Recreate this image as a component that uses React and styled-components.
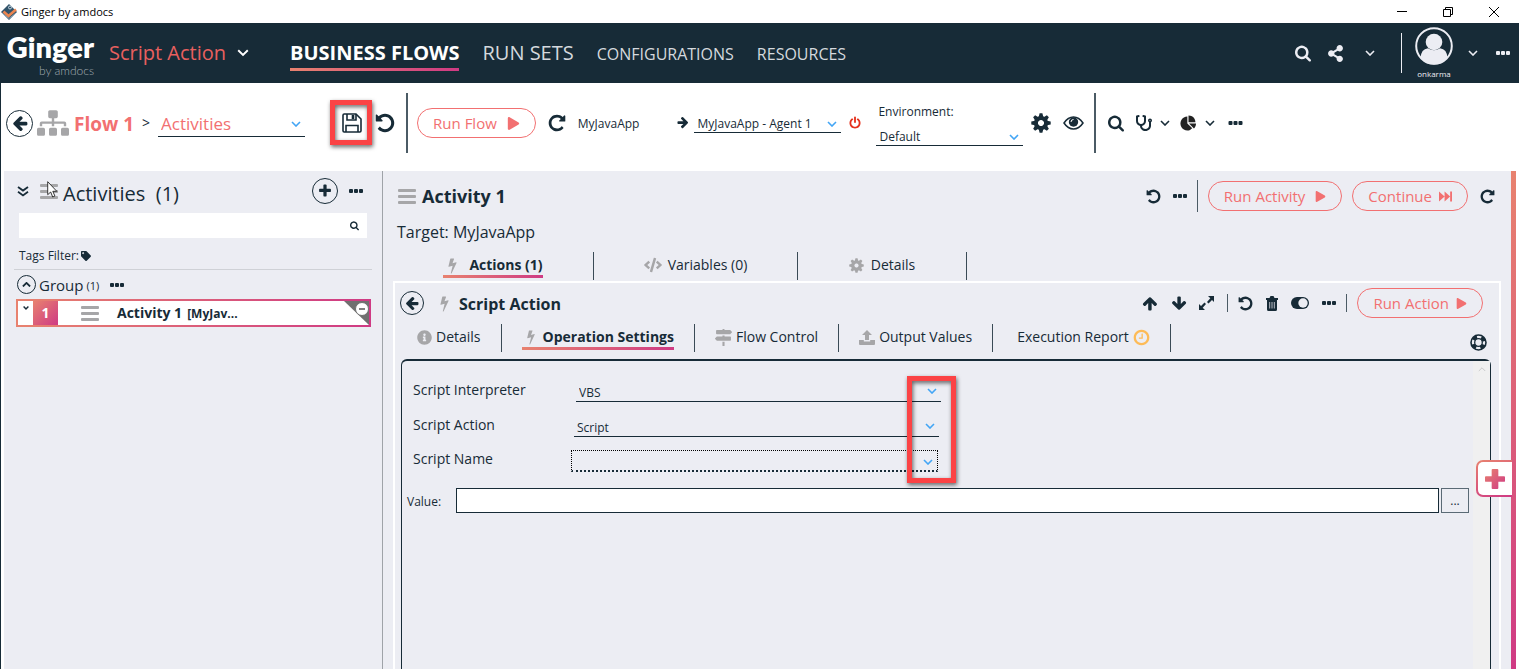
import React from 'react';
import styled, { createGlobalStyle, css } from 'styled-components';
import {
  FaStethoscope, FaShareAlt, FaCode, FaInfoCircle, FaMapSigns,
  FaTag, FaSitemap, FaPlay,
} from 'react-icons/fa';

const ink = '#172b37';
const coral = '#f27071';
const pane = '#ecedf3';
const warm = '#e8826f';
const pink = '#cf3a84';

const GlobalStyle = createGlobalStyle`
  *, *::before, *::after { box-sizing: border-box; }
  body { margin: 0; background: #fff; color: ${ink}; font: 14px/20px "Open Sans", sans-serif; }
  button, select, input { font: inherit; color: inherit; margin: 0; padding: 0; border: 0; background: none; border-radius: 0; }
  button { cursor: pointer; }
  h1, h2, h3, p { margin: 0; font-weight: 400; }
  svg { display: block; flex: none; }
`;

/* ---------- icons ---------- */

const paths = {
  left: 'M1664 896v128q0 53-32.5 90.5t-84.5 37.5h-704l293 294q38 36 38 90t-38 90l-75 76q-37 37-90 37-52 0-91-37l-651-652q-37-37-37-90 0-52 37-91l651-650q38-38 91-38 52 0 90 38l75 74q38 38 38 91t-38 91l-293 293h704q52 0 84.5 37.5t32.5 90.5z',
  undo: 'M1664 896q0 156-61 298t-164 245-245 164-298 61q-172 0-327-72.5t-264-204.5q-7-10-6.5-22.5t8.5-20.5l137-138q10-9 25-9 16 2 23 12 73 95 179 147t225 52q104 0 198.5-40.5t163.5-109.5 109.5-163.5 40.5-198.5-40.5-198.5-109.5-163.5-163.5-109.5-198.5-40.5q-98 0-188 35.5t-160 101.5l137 138q31 30 14 69-17 40-59 40h-448q-26 0-45-19t-19-45v-448q0-42 40-59 39-17 69 14l130 129q107-101 244.5-156.5t284.5-55.5q156 0 298 61t245 164 164 245 61 298z',
  search: 'M1216 832q0-185-131.5-316.5t-316.5-131.5-316.5 131.5-131.5 316.5 131.5 316.5 316.5 131.5 316.5-131.5 131.5-316.5zm512 832q0 52-38 90t-90 38q-54 0-90-38l-343-342q-179 124-399 124-143 0-273.5-55.5t-225-150-150-225-55.5-273.5 55.5-273.5 150-225 225-150 273.5-55.5 273.5 55.5 225 150 150 225 55.5 273.5q0 220-124 399l343 343q37 37 37 90z',
  plus: 'M1600 736v192q0 40-28 68t-68 28h-416v416q0 40-28 68t-68 28h-192q-40 0-68-28t-28-68v-416h-416q-40 0-68-28t-28-68v-192q0-40 28-68t68-28h416v-416q0-40 28-68t68-28h192q40 0 68 28t28 68v416h416q40 0 68 28t28 68z',
  power: 'M1664 896q0 156-61 298t-164 245-245 164-298 61-298-61-245-164-164-245-61-298q0-182 80.5-343t226.5-270q43-32 95.5-25t83.5 50q32 42 24.5 94.5t-49.5 84.5q-98 74-151.5 181t-53.5 228q0 104 40.5 198.5t109.5 163.5 163.5 109.5 198.5 40.5 198.5-40.5 163.5-109.5 109.5-163.5 40.5-198.5q0-121-53.5-228t-151.5-181q-42-32-49.5-84.5t24.5-94.5q31-43 84-50t95 25q146 109 226.5 270t80.5 343zm-640-768v640q0 52-38 90t-90 38-90-38-38-90v-640q0-52 38-90t90-38 90 38 38 90z',
  pie: 'M768 890l546 546q-106 108-247.5 168t-298.5 60q-209 0-385.5-103t-279.5-279.5-103-385.5 103-385.5 279.5-279.5 385.5-103v762zm187 6h773q0 157-60 298.5t-168 247.5zm709-128h-768v-768q209 0 385.5 103t279.5 279.5 103 385.5z',
  clock: 'M1024 544v448q0 14-9 23t-23 9h-320q-14 0-23-9t-9-23v-64q0-14 9-23t23-9h224v-352q0-14 9-23t23-9h64q14 0 23 9t9 23zm416 352q0-148-73-273t-198-198-273-73-273 73-198 198-73 273 73 273 198 198 273 73 273-73 198-198 73-273zm224 0q0 209-103 385.5t-279.5 279.5-385.5 103-385.5-103-279.5-279.5-103-385.5 103-385.5 279.5-279.5 385.5-103 385.5 103 279.5 279.5 103 385.5z',
  bolt: 'M1333 566q18 20 7 44l-540 1157q-13 25-42 25-4 0-14-2-17-5-25.5-19t-4.5-30l197-808-406 101q-4 1-12 1-18 0-31-11-18-15-13-39l201-825q4-16 18-26.5t32-10.5h328q19 0 32 12.5t13 29.5q0 8-5 18l-171 463 396-98q8-2 12-2 19 0 34 15z',
};

const turns = { right: 'rotate(180 896 896)', up: 'rotate(90 896 896)', down: 'rotate(-90 896 896)', flip: 'matrix(-1 0 0 1 1792 0)' };

const Glyph = ({ name, size = 16, turn, fill = 'currentColor' }) => (
  <svg width={size} height={size} viewBox="64 64 1664 1664" overflow="visible" aria-hidden="true">
    <path d={paths[name]} fill={fill} transform={turn ? turns[turn] : undefined} />
  </svg>
);

const Gear = ({ size }) => (
  <svg width={size} height={size} viewBox="0 0 20 20" fill="currentColor" aria-hidden="true">
    {[0, 45, 90, 135].map((a) => (
      <path key={a} transform={`rotate(${a} 10 10)`} d="M8.600.300h2.800l.900 3.700V7H7.700V4zM8.600 19.700h2.800l.900-3.700v-3H7.700v3z" />
    ))}
    <circle cx="10" cy="10" r="5.100" fill="none" stroke="currentColor" strokeWidth="4" />
  </svg>
);
const Dots = ({ w = 14 }) => (
  <svg width={w} height="4" viewBox="0 0 14 4" fill="currentColor" aria-hidden="true">
    <rect width="4" height="4" rx="1" /><rect x="5" width="4" height="4" rx="1" /><rect x="10" width="4" height="4" rx="1" />
  </svg>
);
const Chevron = ({ w = 10, flip, weight = 1.6 }) => (
  <svg width={w} height={w * 0.6} viewBox="0 0 10 6" fill="none" stroke="currentColor" strokeWidth={weight} aria-hidden="true">
    <path d={flip ? 'M1 5l4-4 4 4' : 'M1 1l4 4 4-4'} />
  </svg>
);
const Bars = () => (
  <svg width="18" height="15" viewBox="0 0 18 15" fill="#a6a6a8" aria-hidden="true">
    <rect width="18" height="3" rx="1" /><rect y="6" width="18" height="3" rx="1" /><rect y="12" width="18" height="3" rx="1" />
  </svg>
);
const Floppy = () => (
  <svg width="20" height="20" viewBox="0 0 20 20" fill="none" stroke="currentColor" strokeWidth="1.6" aria-hidden="true">
    <path d="M1 2.200Q1 1 2.200 1H14l5 5v11.800q0 1.200-1.200 1.200H2.200Q1 19 1 17.800z" />
    <path d="M5 1v6h9V1M4 19v-6.500h12V19" />
    <path d="M11 2v4" strokeWidth="2.600" />
  </svg>
);
const Eye = () => (
  <svg width="21" height="14" viewBox="0 0 21 14" aria-hidden="true">
    <path d="M1 7Q5 1 10.500 1T20 7Q16 13 10.500 13T1 7z" fill="none" stroke="currentColor" strokeWidth="1.500" />
    <circle cx="10.500" cy="6" r="4.700" fill="currentColor" />
    <path d="M8 6q0-2.500 2.500-2.500" stroke="#fff" strokeWidth="1" fill="none" />
  </svg>
);
const Trash = () => (
  <svg width="12" height="15" viewBox="0 0 12 15" aria-hidden="true">
    <path d="M0 2h3.500L4.500 0h3l1 2H12v2H0zM1 4h10v9.500q0 1.500-1.500 1.500h-7Q1 15 1 13.500z" fill="currentColor" />
    <path d="M3.700 6v6.500M6 6v6.500M8.300 6v6.500" stroke="#b9bdc6" strokeWidth="1" />
  </svg>
);
const Toggle = () => (
  <svg width="18" height="12" viewBox="0 0 18 12" aria-hidden="true">
    <rect width="18" height="12" rx="6" fill="currentColor" /><circle cx="12" cy="6" r="4.700" fill={pane} />
  </svg>
);
const Expand = () => (
  <svg width="15" height="14" viewBox="0 0 15 14" fill="currentColor" aria-hidden="true">
    <path d="M9 0h6v6l-2-2-3.500 3.400L8 6l3.300-3.700zM0 8l2 2 3.500-3.400L7 8l-3.300 3.700L6 14H0z" />
  </svg>
);
const LifeRing = () => (
  <svg width="17" height="17" viewBox="0 0 17 17" fill="none" stroke="currentColor" aria-hidden="true">
    <circle cx="8.500" cy="8.500" r="7.500" strokeWidth="1.600" />
    <circle cx="8.500" cy="8.500" r="3.800" strokeWidth="1.300" />
    <circle cx="8.500" cy="8.500" r="5.700" strokeWidth="3.600" strokeDasharray="4.500 4.454" strokeDashoffset="-2.230" />
  </svg>
);
const Upload = () => (
  <svg width="16" height="15" viewBox="0 0 16 15" fill="currentColor" aria-hidden="true">
    <path d="M8 0l5 5h-3v5H6V5H3zM0 10h4.800v1.500h6.400V10H16v4q0 1-1 1H1q-1 0-1-1z" />
  </svg>
);
const FastForward = () => (
  <svg width="13" height="11" viewBox="0 0 14 11" fill="currentColor" aria-hidden="true">
    <path d="M0 0l6 5.500L0 11zM6 0l6 5.500L6 11zM12 0h2v11h-2z" />
  </svg>
);
const Avatar = () => (
  <svg width="38" height="38" viewBox="0 0 38 38" aria-hidden="true">
    <circle cx="19" cy="19" r="17.800" fill="none" stroke={pane} strokeWidth="2" />
    <circle cx="19" cy="15" r="8.300" fill={pane} />
    <path d="M5.500 31q.500-9 7.500-9.800 6 4 12 0 7 .800 7.500 9.800-5 6.500-13.500 6.500T5.500 31z" fill={pane} />
  </svg>
);
const AppMark = () => (
  <svg width="16" height="16" viewBox="0 0 16 16" aria-hidden="true">
    <path d="M8 0l8 8-8 8-8-8z" fill="#31536a" />
    <circle cx="9" cy="3.500" r="1.500" fill="none" stroke="#c4d4de" />
    <path d="M2.500 7.500l5 4.500L15 5.500" fill="none" stroke="#ea8550" strokeWidth="2.600" />
    <path d="M1 9l7 5.500L15 9" fill="none" stroke="#a9c0cd" strokeWidth=".700" />
  </svg>
);
const DoubleChevron = () => (
  <svg width="12" height="11" viewBox="0 0 12 11" fill="none" stroke="currentColor" strokeWidth="1.800" aria-hidden="true">
    <path d="M1 1l5 3.600L11 1M1 5.800l5 3.600 5-3.600" />
  </svg>
);

/* ---------- shared parts ---------- */

const Page = styled.div`
  display: flex;
  flex-direction: column;
  min-height: 100vh;
`;
const Group = styled.div`
  display: flex;
  align-items: center;
  gap: ${(p) => p.$gap || 0}px;
  margin-left: ${(p) => (p.$push ? 'auto' : `${p.$ml || 0}px`)};
`;
const IconButton = styled.button`
  display: grid;
  place-items: center;
  flex: none;
  color: ${(p) => p.$color || 'inherit'};
`;
const RoundButton = styled(IconButton)`
  width: ${(p) => p.$size}px;
  height: ${(p) => p.$size}px;
  border: 1px solid ${ink};
  border-radius: 50%;
  background: ${(p) => p.$bg || '#fff'};
`;
const Pill = styled.button`
  display: flex;
  align-items: center;
  justify-content: center;
  gap: ${(p) => p.$gap || 10}px;
  height: 30px;
  padding: 0 15px;
  border: 1px solid ${coral};
  border-radius: 15px;
  color: ${coral};
  font-size: 15px;
  white-space: nowrap;
`;
const Rule = styled.span`
  flex: none;
  width: ${(p) => p.$w || 1}px;
  height: ${(p) => p.$h}px;
  background: ${(p) => p.$color || '#4b5b65'};
`;
const SelectBox = styled.span`
  position: relative;
  display: flex;
  width: ${(p) => p.$w}px;
  border-bottom: ${(p) => (p.$focus ? 0 : '1px')} solid ${ink};
  ${(p) => p.$focus && css`
    margin-top: 2px;
    border: 1px dotted #000;
    border-bottom: 2px dotted ${ink};
  `}
  > svg { position: absolute; right: 4px; top: 50%; margin-top: -2px; color: #42a5f5; pointer-events: none; }
`;
const NativeSelect = styled.select`
  appearance: none;
  flex: 1;
  height: ${(p) => p.$h || 18}px;
  padding: ${(p) => p.$drop || 0}px 18px 0 3px;
  outline: 0;
  font-size: ${(p) => p.$size || 12}px;
  line-height: 18px;
  color: ${(p) => p.$color || 'inherit'};
`;
const Picker = ({ id, label, value, w, h, size, color, focus, drop }) => (
  <SelectBox $w={w} $focus={focus}>
    <NativeSelect id={id} aria-label={label} $h={h} $size={size} $color={color} $drop={drop}><option>{value}</option></NativeSelect>
    <Chevron />
  </SelectBox>
);
const Highlight = styled.span`
  position: absolute;
  inset: ${(p) => p.$inset};
  border: 5px solid #fb4345;
  filter: drop-shadow(1px 2px 2px rgba(0, 0, 0, 0.6));
  pointer-events: none;
`;
const Anchor = styled.span`
  position: relative;
  display: flex;
`;

/* ---------- title bar and header ---------- */

const TitleBar = styled.div`
  display: flex;
  align-items: center;
  justify-content: space-between;
  height: 23px;
  padding: 0 20px 0 1px;
  color: #000;
  font-size: 11px;
`;
const Header = styled.header`
  display: flex;
  align-items: center;
  height: 60px;
  padding: 0 9px 0 5px;
  background: ${ink};
  color: ${pane};
`;
const Logo = styled.div`
  display: flex;
  flex-direction: column;
  align-items: flex-end;
  width: 89px;
  font-family: Lato, sans-serif;
`;
const LogoName = styled.span`
  font-size: 29px;
  font-weight: 800;
  line-height: 35px;
  color: #fff;
`;
const LogoBy = styled.span`
  font-size: 12px;
  font-weight: 300;
  line-height: 14px;
  color: #a2abb2;
`;
const Solution = styled.button`
  display: flex;
  align-items: center;
  gap: 11px;
  margin-left: 15px;
  font-size: 20px;
  color: #e8605f;
  > svg { color: #fff; }
`;
const Nav = styled.nav`
  display: flex;
  align-items: baseline;
  gap: 23px;
  margin-left: 41px;
`;
const NavLink = styled.a`
  padding: 4px 0 1px;
  border-bottom: 3px solid transparent;
  color: ${(p) => (p.$active ? '#fff' : '#d5d9de')};
  font-size: ${(p) => (p.$small ? 16 : 20)}px;
  font-weight: ${(p) => (p.$active ? 700 : 400)};
  line-height: 28px;
  text-decoration: none;
  white-space: nowrap;
  ${(p) => p.$active && css`border-image: linear-gradient(90deg, ${warm}, ${pink}) 1;`}
`;
const User = styled.button`
  display: flex;
  flex-direction: column;
  align-items: center;
  gap: 4px;
  font-size: 8px;
  line-height: 10px;
`;

/* ---------- toolbar ---------- */

const Frame = styled.div`
  display: flex;
  flex: 1;
  flex-direction: column;
  border-left: 1px solid ${ink};
`;
const Toolbar = styled.div`
  display: flex;
  align-items: center;
  height: 80px;
  margin-bottom: 8px;
  padding-left: 5px;
  white-space: nowrap;
`;
const FlowName = styled.h1`
  margin-left: 5px;
  padding-top: 2px;
  color: ${coral};
  font-size: 19px;
  font-weight: 700;
`;
const Small = styled.span`
  font-size: ${(p) => p.$size || 12}px;
  padding-top: 2px;
`;
const Environment = styled.label`
  display: flex;
  flex-direction: column;
  gap: 5px;
  padding-top: 2px;
  font-size: 12px;
  > span:first-child { padding-left: 2px; }
`;

/* ---------- activities sidebar ---------- */

const Body = styled.div`
  display: flex;
  flex: 1;
  padding: 0 3px;
`;
const Sidebar = styled.aside`
  width: 379px;
  padding: 6px 10px 0;
  border-right: 1px solid #9fa3a8;
  background: ${pane};
`;
const SideHead = styled.div`
  display: flex;
  align-items: center;
  height: 28px;
  padding: 0 9px 0 3px;
`;
const SideTitle = styled.h2`
  margin: 6px 0 0 5px;
  font-size: 20px;
  line-height: 26px;
  white-space: pre;
`;
const Cursor = styled.svg`
  position: absolute;
  top: -3px;
  left: 7px;
`;
const SearchBox = styled.div`
  display: flex;
  align-items: center;
  height: 25px;
  margin: 8px 5px 7px;
  padding-right: 8px;
  background: #fff;
  input { flex: 1; height: 25px; outline: 0; }
`;
const Tags = styled.div`
  display: flex;
  align-items: center;
  gap: 2px;
  height: 25px;
  padding: 0 0 2px 5px;
  border-bottom: 1px solid #cfd1d6;
  font-size: 12px;
`;
const GroupRow = styled.div`
  display: flex;
  align-items: center;
  gap: 3px;
  height: 29px;
  padding: 0 0 0 3px;
  font-size: 15px;
`;
const ActivityItem = styled.div`
  position: relative;
  display: flex;
  align-items: center;
  height: 28px;
  margin: 0 1px 0 2px;
  border: 2px solid;
  border-image: linear-gradient(90deg, ${warm}, ${pink}) 1;
  background: #fff;
  font-weight: 700;
`;
const ItemArrow = styled.button`
  display: flex;
  align-self: stretch;
  justify-content: center;
  width: 15px;
  padding-top: 5px;
`;
const ItemNumber = styled.span`
  display: grid;
  place-items: center;
  align-self: stretch;
  width: 25px;
  margin-right: 23px;
  background: linear-gradient(135deg, ${warm}, ${pink});
  color: #fff;
`;
const ItemCorner = styled.svg`
  position: absolute;
  top: 0;
  right: 0;
`;

/* ---------- main pane ---------- */

const Main = styled.main`
  display: flex;
  flex: 1;
  flex-direction: column;
  min-width: 0;
  padding: 9px 10px 0;
  background: ${pane};
`;
const MainHead = styled.div`
  display: flex;
  align-items: center;
  height: 32px;
  padding: 0 6px 0 5px;
`;
const MainTitle = styled.h2`
  margin-left: 6px;
  font-size: 18px;
  font-weight: 700;
`;
const Target = styled.p`
  margin: 8px 0 8px 4px;
  font-size: 16px;
  line-height: 24px;
`;
const Tabs = styled.div`
  display: flex;
  height: 28px;
`;
const Tab = styled.button`
  display: flex;
  align-items: flex-start;
  justify-content: center;
  height: 28px;
  width: ${(p) => (p.$w ? `${p.$w}px` : 'auto')};
  padding: 0 ${(p) => (p.$w ? 0 : 20)}px;
  border-right: 1px solid #3a4b56;
  font-weight: ${(p) => (p.$active ? 700 : 400)};
`;
const TabText = styled.span`
  display: flex;
  align-items: center;
  gap: ${(p) => p.$gap || 4}px;
  height: 26px;
  padding: 3px 0 0 ${(p) => (p.$active ? 2 : 0)}px;
  border-bottom: 3px solid transparent;
  white-space: nowrap;
  ${(p) => p.$active && css`border-image: linear-gradient(90deg, ${warm}, ${pink}) 1;`}
  > svg { color: #a6a6a8; }
`;
const Card = styled.section`
  display: flex;
  flex: 1;
  flex-direction: column;
  margin-top: 1px;
  padding: 4px 8px 0 2px;
  border: 2px solid #fff;
  border-bottom: 0;
`;
const CardHead = styled.div`
  display: flex;
  align-items: center;
  height: 32px;
  padding: 0 8px 0 3px;
`;
const CardTitle = styled.h3`
  padding-top: 2px;
  font-size: 16px;
  font-weight: 700;
`;
const TabRow = styled.div`
  display: flex;
  align-items: flex-start;
  justify-content: space-between;
  height: 40px;
  padding: 5px 4px 0 0;
  > button { margin-top: 10px; }
`;
const Form = styled.form`
  display: flex;
  flex: 1;
  margin-left: 4px;
  border: 1px solid ${ink};
  border-top-width: 2px;
  border-bottom: 0;
  border-radius: 6px 6px 0 0;
`;
const Fields = styled.div`
  flex: 1;
  padding: 18px 4px 0 5px;
`;
const Field = styled.div`
  display: flex;
  align-items: flex-start;
  height: ${(p) => p.$h || 34}px;
  padding-left: 6px;
  > label { flex: none; width: ${(p) => p.$label}px; margin-top: 1px; }
`;
const FieldSet = styled.div`
  position: relative;
  width: 538px;
`;
const ValueRow = styled.div`
  display: flex;
  align-items: center;
  gap: 2px;
  margin-top: 6px;
  label { width: 47px; padding-top: 2px; font-size: 12px; }
  input { flex: 1; height: 25px; border: 1px solid ${ink}; background: #fff; padding: 0 4px; }
  button { width: 28px; height: 25px; border: 1px solid #5a6a75; font-size: 12px; line-height: 20px; }
`;
const ScrollTrack = styled.div`
  display: flex;
  justify-content: center;
  width: 17px;
  padding-top: 6px;
  background: #f0f0f0;
  color: #bfc0c2;
`;
const AddRail = styled.div`
  position: relative;
  width: 5px;
  background: linear-gradient(${warm}, ${pink});
`;
const AddTab = styled.button`
  position: absolute;
  top: 289px;
  right: 4px;
  display: grid;
  place-items: center;
  width: 36px;
  height: 37px;
  padding-right: 1px;
  border: 2px solid transparent;
  border-right: 0;
  border-radius: 7px 0 0 7px;
  background: linear-gradient(#fff, #fff) padding-box, linear-gradient(160deg, ${warm}, ${pink}) border-box;
`;

export default function App() {
  return (
    <Page>
      <GlobalStyle />
      <TitleBar>
        <Group $gap={4}><AppMark />Ginger by amdocs</Group>
        <Group $gap={36}>
          <IconButton aria-label="Minimize"><svg width="10" height="10" stroke="#000"><path d="M0 4.500h10" /></svg></IconButton>
          <IconButton aria-label="Restore"><svg width="10" height="10" fill="none" stroke="#000"><path d="M.500 2.500h7v7h-7zM2.500 2.500v-2h7v7h-2" /></svg></IconButton>
          <IconButton aria-label="Close"><svg width="10" height="10" stroke="#000"><path d="M0 0l10 10M10 0L0 10" /></svg></IconButton>
        </Group>
      </TitleBar>

      <Header>
        <Logo><LogoName>Ginger</LogoName><LogoBy>by amdocs</LogoBy></Logo>
        <Solution>Script Action<Chevron w={12} /></Solution>
        <Nav>
          <NavLink href="#flows" $active>BUSINESS FLOWS</NavLink>
          <NavLink href="#runs">RUN SETS</NavLink>
          <NavLink href="#config" $small>CONFIGURATIONS</NavLink>
          <NavLink href="#resources" $small>RESOURCES</NavLink>
        </Nav>
        <Group $push>
          <Group $gap={16}>
            <IconButton aria-label="Search"><Glyph name="search" size={16} /></IconButton>
            <IconButton aria-label="Share"><FaShareAlt size={17} /></IconButton>
          </Group>
          <Group $ml={21} $gap={26}>
            <IconButton aria-label="More sharing"><Chevron /></IconButton>
            <Rule $h={40} $color={pane} />
          </Group>
          <Group $ml={13} $gap={15}>
            <User><Avatar />onkarma</User>
            <IconButton aria-label="User menu"><Chevron /></IconButton>
          </Group>
          <Group $ml={18}><IconButton aria-label="More"><Dots /></IconButton></Group>
        </Group>
      </Header>

      <Frame>
        <Toolbar>
          <Group $gap={4}>
            <RoundButton $size={27} aria-label="Back"><Glyph name="left" size={16} /></RoundButton>
            <FaSitemap size={32} color="#a6a6a8" />
          </Group>
          <FlowName>Flow 1</FlowName>
          <Group $ml={8} $gap={8}>
            <span>&gt;</span>
            <Picker label="Flow section" value="Activities" w={147} h={26} size={17} color={coral} drop={2} />
          </Group>
          <Group $ml={37} $gap={13}>
            <Anchor>
              <IconButton aria-label="Save"><Floppy /></IconButton>
              <Highlight $inset="-13px -10px -12px -12px" />
            </Anchor>
            <IconButton aria-label="Undo"><Glyph name="undo" size={20} /></IconButton>
          </Group>
          <Group $ml={11} $gap={9}>
            <Rule $h={60} $w={2} />
            <Pill>Run Flow<FaPlay size={13} /></Pill>
          </Group>
          <Group $ml={12} $gap={12}>
            <IconButton aria-label="Reset flow"><Glyph name="undo" turn="flip" size={18} /></IconButton>
            <Small>MyJavaApp</Small>
          </Group>
          <Group $ml={38} $gap={5}>
            <Glyph name="left" turn="right" size={12} />
            <Picker label="Agent" value="MyJavaApp - Agent 1" w={147} drop={1} />
          </Group>
          <Group $ml={8} $gap={15}>
            <IconButton $color="#e5311d" aria-label="Stop agent"><Glyph name="power" size={12} /></IconButton>
            <Environment>
              <span>Environment:</span>
              <Picker label="Environment" value="Default" w={147} drop={1} />
            </Environment>
          </Group>
          <Group $ml={8} $gap={12}>
            <IconButton aria-label="Settings"><Gear size={20} /></IconButton>
            <IconButton aria-label="Show"><Eye /></IconButton>
          </Group>
          <Group $ml={10} $gap={12}>
            <Rule $h={60} $w={2} />
            <IconButton aria-label="Find"><Glyph name="search" size={16} /></IconButton>
          </Group>
          <Group $ml={12} $gap={8}>
            <IconButton aria-label="Analyze"><FaStethoscope size={16} /></IconButton>
            <IconButton aria-label="Analyze menu"><Chevron /></IconButton>
          </Group>
          <Group $ml={11} $gap={9}>
            <IconButton $color="#222" aria-label="Reports"><Glyph name="pie" size={15} /></IconButton>
            <IconButton aria-label="Reports menu"><Chevron /></IconButton>
          </Group>
          <Group $ml={13}><IconButton aria-label="More flow options"><Dots w={15} /></IconButton></Group>
        </Toolbar>

        <Body>
          <Sidebar>
            <SideHead>
              <Group $gap={11}>
                <IconButton aria-label="Collapse all"><DoubleChevron /></IconButton>
                <Anchor>
                  <Bars />
                  <Cursor width="11" height="17" viewBox="0 0 11 17"><path d="M.700.700v13l3-2.700 2 5 2.200-1-2.100-4.700h4z" fill="#fff" stroke="#222" strokeWidth=".900" /></Cursor>
                </Anchor>
              </Group>
              <SideTitle>Activities  (1)</SideTitle>
              <Group $push $gap={11}>
                <RoundButton $size={26} $bg={pane} aria-label="Add activity"><Glyph name="plus" size={14} /></RoundButton>
                <IconButton aria-label="Activity options"><Dots /></IconButton>
              </Group>
            </SideHead>
            <SearchBox><input aria-label="Search activities" /><Glyph name="search" size={9} /></SearchBox>
            <Tags>Tags Filter:<FaTag size={10} /></Tags>
            <GroupRow>
              <RoundButton $size={19} $bg={pane} aria-label="Collapse group"><Chevron w={9} flip weight={2} /></RoundButton>
              <span>Group</span><Small $size={11}>(1)</Small>
              <Group $ml={8}><Dots /></Group>
            </GroupRow>
            <ActivityItem>
              <ItemArrow aria-label="Expand activity"><Chevron w={6} weight={2.4} /></ItemArrow>
              <ItemNumber>1</ItemNumber>
              <Bars />
              <Group $ml={18} $gap={5}><span>Activity 1</span><Small>[MyJav...</Small></Group>
              <ItemCorner width="25" height="24" viewBox="0 0 25 24">
                <path d="M0 0h25v24z" fill="#707070" /><circle cx="18" cy="8" r="6.500" fill="#fff" stroke="#707070" /><path d="M15 8h6" stroke="#555" strokeWidth="1.500" />
              </ItemCorner>
            </ActivityItem>
          </Sidebar>

          <Main>
            <MainHead>
              <Bars />
              <MainTitle>Activity 1</MainTitle>
              <Group $push $gap={10}>
                <Group $gap={12}>
                  <IconButton aria-label="Undo activity"><Glyph name="undo" size={15} /></IconButton>
                  <IconButton aria-label="More activity options"><Dots /></IconButton>
                </Group>
                <Rule $h={32} />
                <Pill>Run Activity<FaPlay size={11} /></Pill>
                <Pill $gap={7}>Continue<FastForward /></Pill>
                <Group $ml={2}><IconButton aria-label="Reset activity"><Glyph name="undo" turn="flip" size={15} /></IconButton></Group>
              </Group>
            </MainHead>
            <Target>Target: MyJavaApp</Target>
            <Tabs>
              <Tab $w={201} $active><TabText $active $gap={9}><Glyph name="bolt" size={15} />Actions (1)</TabText></Tab>
              <Tab $w={204}><TabText $gap={6}><FaCode size={18} />Variables (0)</TabText></Tab>
              <Tab $w={169}><TabText $gap={7}><Gear size={15} />Details</TabText></Tab>
            </Tabs>

            <Card>
              <CardHead>
                <Group $gap={13}>
                  <RoundButton $size={24} $bg={pane} aria-label="Back to actions"><Glyph name="left" size={14} /></RoundButton>
                  <Group $gap={7}>
                    <IconButton as="span" $color="#a6a6a8"><Glyph name="bolt" size={15} /></IconButton>
                    <CardTitle>Script Action</CardTitle>
                  </Group>
                </Group>
                <Group $push $gap={13}>
                  <IconButton aria-label="Move up"><Glyph name="left" turn="up" size={15} /></IconButton>
                  <IconButton aria-label="Move down"><Glyph name="left" turn="down" size={15} /></IconButton>
                  <IconButton aria-label="Expand"><Expand /></IconButton>
                  <Group $gap={10}>
                    <Rule $h={18} />
                    <IconButton aria-label="Undo action"><Glyph name="undo" size={15} /></IconButton>
                  </Group>
                  <IconButton aria-label="Delete"><Trash /></IconButton>
                  <IconButton aria-label="Enable"><Toggle /></IconButton>
                  <Group $gap={10}>
                    <IconButton aria-label="More action options"><Dots /></IconButton>
                    <Rule $h={18} />
                    <Pill $gap={7}>Run Action<FaPlay size={11} /></Pill>
                  </Group>
                </Group>
              </CardHead>
              <TabRow>
                <Tabs>
                  <Tab><TabText><FaInfoCircle size={15} />Details</TabText></Tab>
                  <Tab $active><TabText $active $gap={5}><Glyph name="bolt" size={14} />Operation Settings</TabText></Tab>
                  <Tab><TabText><FaMapSigns size={17} />Flow Control</TabText></Tab>
                  <Tab><TabText><Upload />Output Values</TabText></Tab>
                  <Tab><Group $ml={4}><TabText>Execution Report<Glyph name="clock" size={17} fill="#fdbb57" /></TabText></Group></Tab>
                </Tabs>
                <IconButton aria-label="Help"><LifeRing /></IconButton>
              </TabRow>
              <Form onSubmit={(e) => e.preventDefault()}>
                <Fields>
                  <FieldSet>
                    <Field $label={163} $h={35}><label htmlFor="interp">Script Interpreter</label><Picker id="interp" value="VBS" w={365} h={22} drop={5} /></Field>
                    <Field $label={161}><label htmlFor="action">Script Action</label><Picker id="action" value="Script" w={365} h={22} drop={5} /></Field>
                    <Field $label={158}><label htmlFor="name">Script Name</label><Picker id="name" value="" w={367} h={19} focus /></Field>
                    <Highlight $inset="-3px -11px -1px 500px" />
                  </FieldSet>
                  <ValueRow>
                    <label htmlFor="value">Value:</label>
                    <input id="value" />
                    <button type="button" aria-label="Edit value">...</button>
                  </ValueRow>
                </Fields>
                <ScrollTrack><Chevron w={8} flip weight={1} /></ScrollTrack>
              </Form>
            </Card>
          </Main>
          <AddRail>
            <AddTab aria-label="Add">
              <svg width="20" height="20" viewBox="0 0 21 21">
                <defs><linearGradient id="plusFill" x1="0" y1="0" x2="1" y2="1"><stop stopColor={warm} /><stop offset="1" stopColor={pink} /></linearGradient></defs>
                <path d="M8 0h5q1 0 1 1v6.500h6q1 0 1 1v4q0 1-1 1h-6V20q0 1-1 1H8q-1 0-1-1v-6.500H1q-1 0-1-1v-4q0-1 1-1h6V1q0-1 1-1z" fill="url(#plusFill)" />
              </svg>
            </AddTab>
          </AddRail>
        </Body>
      </Frame>
    </Page>
  );
}
